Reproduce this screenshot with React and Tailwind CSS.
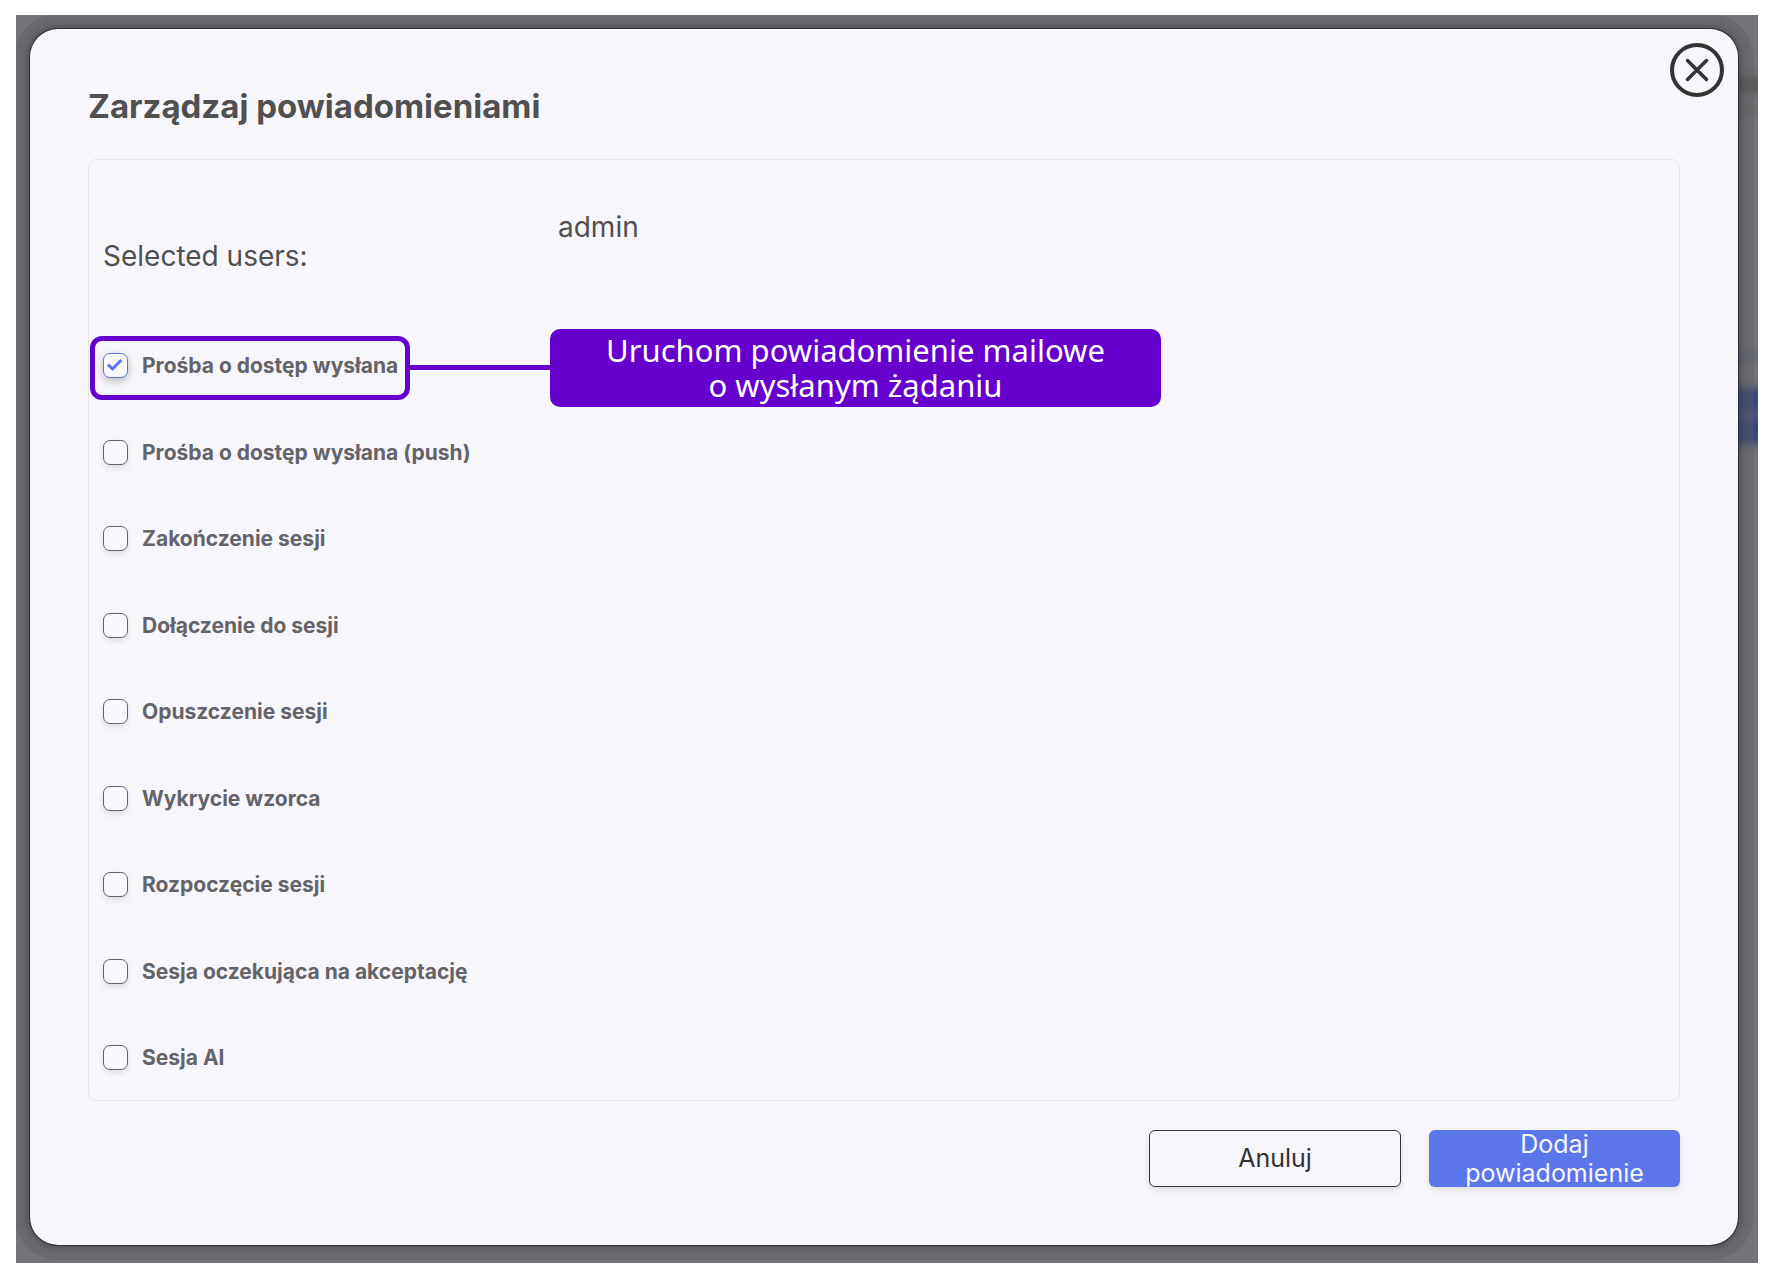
import React, { useState } from 'react';

const NOTIFICATIONS = [
    { id: 'request-sent', label: 'Prośba o dostęp wysłana', hint: true },
    { id: 'request-sent-push', label: 'Prośba o dostęp wysłana (push)' },
    { id: 'session-end', label: 'Zakończenie sesji' },
    { id: 'session-join', label: 'Dołączenie do sesji' },
    { id: 'session-leave', label: 'Opuszczenie sesji' },
    { id: 'pattern', label: 'Wykrycie wzorca' },
    { id: 'session-start', label: 'Rozpoczęcie sesji' },
    { id: 'session-pending', label: 'Sesja oczekująca na akceptację' },
    { id: 'session-ai', label: 'Sesja AI' },
];

function Hint() {
    return (
        <div className="absolute -left-[13px] top-1/2 -translate-y-1/2 mt-[2px] flex items-center pointer-events-none">
            <div className="w-80 h-16 rounded-xl border-5 border-[#6600cc]"></div>
            <div className="w-[140px] h-[5px] bg-[#6600cc]"></div>
            <div className="w-[611px] rounded-[10px] bg-[#6600cc] py-1 text-center text-white text-[31px] leading-[35px] font-['Noto_Sans',sans-serif]">
                Uruchom powiadomienie mailowe
                <br />
                o wysłanym żądaniu
            </div>
        </div>
    );
}

function NotificationRow({ item, checked, onToggle }) {
    return (
        <li className="relative flex">
            <label htmlFor={item.id} className="flex items-center gap-[14px] text-[21px] leading-[25px] font-bold text-[#646368]">
                <span className="relative flex">
                    <input
                        id={item.id}
                        type="checkbox"
                        checked={checked}
                        onChange={() => onToggle(item.id)}
                        className="appearance-none w-[25px] h-[25px] rounded-[7px] border border-[#646368] checked:border-[#5b76ea] bg-[#f8f8fd] shadow-[0_3px_6px_rgba(0,0,0,0.1)] checked:shadow-[0_3px_8px_rgba(0,0,0,0.25)]"
                    />
                    {checked && (
                        <svg viewBox="0 0 25 25" className="absolute inset-0 pointer-events-none" fill="none" stroke="#5b76ea" strokeWidth="3">
                            <path d="M5 11.6 L9.5 15.8 L18.4 7" />
                        </svg>
                    )}
                </span>
                {item.label}
            </label>
            {item.hint && <Hint />}
        </li>
    );
}

export default function App() {
    const [selected, setSelected] = useState(['request-sent']);

    const toggle = (id) => {
        setSelected((prev) => (prev.includes(id) ? prev.filter((x) => x !== id) : [...prev, id]));
    };

    return (
        <div className="min-h-screen flex bg-white pt-[15px] pr-[15px] pb-6 pl-4 font-[Inter,sans-serif]">
            <div className="relative flex-1 flex overflow-hidden bg-[#737478] pt-[14px] pr-5 pb-[18px] pl-[14px]">
                {/* Blurred page content behind the dialog */}
                <div className="absolute -right-4 top-[62px] w-14 h-4 bg-[#545558] blur-[6px]"></div>
                <div className="absolute -right-4 top-[92px] w-14 h-2 bg-[#66676a] blur-[4px]"></div>
                <div className="absolute -right-4 top-[338px] w-14 h-2 bg-[#5f6277] blur-[4px]"></div>
                <div className="absolute -right-4 top-[372px] w-14 h-[58px] bg-[#3a467c] blur-[4px]"></div>
                <div className="absolute -right-4 top-[396px] w-14 h-2 bg-[#525a82] blur-[5px]"></div>

                <div
                    role="dialog"
                    aria-labelledby="dialog-title"
                    className="relative flex-1 flex flex-col rounded-[28px] bg-[#f7f6fb] px-[58px] pt-[57px] pb-[58px] shadow-[0_0_0_1px_#2b2b3f,0_0_8px_2px_rgba(0,0,0,0.3),0_0_0_15px_rgba(90,92,92,0.4)]"
                >
                    <button type="button" aria-label="Zamknij" className="absolute right-[14px] top-[14px]">
                        <svg width="54" height="54" viewBox="0 0 54 54" fill="none" stroke="#333333" strokeWidth="4" strokeLinecap="round">
                            <circle cx="27" cy="27" r="25" />
                            <path d="M17.5 17.5 L36.5 36.5 M36.5 17.5 L17.5 36.5" strokeWidth="3.5" />
                        </svg>
                    </button>

                    <h1 id="dialog-title" className="text-[33px] leading-10 font-bold text-[#505050]">Zarządzaj powiadomieniami</h1>

                    <section className="mt-[33px] flex-1 flex flex-col rounded-lg border border-[#e5e5ec] pt-[53px] px-[14px] pb-[30px]">
                        <div className="flex text-[28px] leading-[29px] text-[#505050]">
                            <div className="w-[455px] pt-[29px]">Selected users:</div>
                            <div>admin</div>
                        </div>

                        <ul className="mt-[82px] flex-1 flex flex-col justify-between">
                            {NOTIFICATIONS.map((item) => (
                                <NotificationRow key={item.id} item={item} checked={selected.includes(item.id)} onToggle={toggle} />
                            ))}
                        </ul>
                    </section>

                    <div className="mt-[29px] flex justify-end gap-7 text-[25px] leading-[29px]">
                        <button type="button" className="w-[252px] h-[57px] rounded-md border border-[#333333] text-[#333333] shadow-[0_3px_6px_rgba(0,0,0,0.1)]">
                            Anuluj
                        </button>
                        <button type="button" className="w-[251px] h-[57px] rounded-md bg-[#5b76ea] text-[#f7f6fc] shadow-[0_3px_6px_rgba(0,0,0,0.1)]">
                            Dodaj
                            <br />
                            powiadomienie
                        </button>
                    </div>
                </div>
            </div>
        </div>
    );
}
